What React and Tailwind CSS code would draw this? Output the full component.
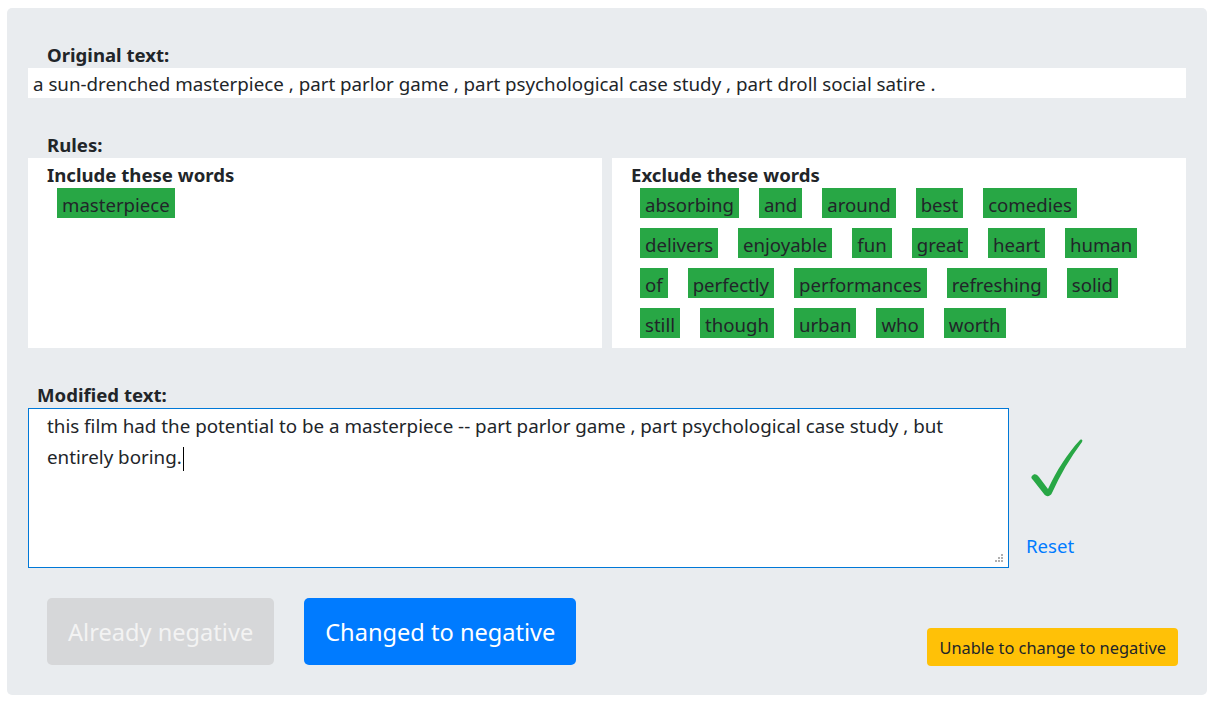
import React from 'react';

const include = ['masterpiece'];
const exclude = [
   'absorbing', 'and', 'around', 'best', 'comedies',
   'delivers', 'enjoyable', 'fun', 'great', 'heart', 'human',
   'of', 'perfectly', 'performances', 'refreshing', 'solid',
   'still', 'though', 'urban', 'who', 'worth',
];

function Tag({ word }) {
   return (
      <span className="bg-[#28a745] text-[#212529] h-[30px] leading-[26px] pt-[4px] px-[5px] text-[18.6px]">
         {word}
      </span>
   );
}

export default function App() {
   return (
      <div className="bg-white min-h-screen pl-[7px] pr-[8px] pt-[8px] pb-[9px] font-['Noto_Sans',sans-serif] text-[#212529]">
         <div className="bg-[#e9ecef] rounded-[5px] px-[21px] pt-[35px] pb-[30px]">
            <div className="pl-[19px] font-bold text-[18.6px] leading-[24px] mb-px">Original text:</div>
            <div className="bg-white h-[30px] leading-[28px] pt-[2px] pl-[5px] text-[18.75px]">
               a sun-drenched masterpiece , part parlor game , part psychological case study , part droll social satire .
            </div>

            <div className="pl-[19px] font-bold text-[18.6px] leading-[24px] mt-[35px] mb-px">Rules:</div>
            <div className="flex gap-[10px]">
               <div className="flex-1 bg-white h-[190px] pt-[5px]">
                  <div className="pl-[19px] font-bold text-[18.6px] leading-[24px] mb-px">Include these words</div>
                  <div className="flex flex-wrap gap-x-[20px] gap-y-[10px] pl-[29px]">
                     {include.map(w => <Tag key={w} word={w} />)}
                  </div>
               </div>
               <div className="flex-1 bg-white h-[190px] pt-[5px]">
                  <div className="pl-[19px] font-bold text-[18.6px] leading-[24px] mb-px">Exclude these words</div>
                  <div className="flex flex-wrap gap-x-[20px] gap-y-[10px] pl-[28px] pr-[30px]">
                     {exclude.map(w => <Tag key={w} word={w} />)}
                  </div>
               </div>
            </div>

            <div className="pl-[9px] font-bold text-[18.6px] leading-[24px] mt-[35px] mb-px">Modified text:</div>
            <div className="flex">
               <div className="relative w-[981px] h-[160px] bg-white border border-[#0078d7] pl-[18px] pr-[20px] pt-[2px] text-[18.8px] leading-[31px]">
                  this film had the potential to be a masterpiece -- part parlor game , part psychological case study , but entirely boring.<span className="inline-block w-px h-[24px] bg-black align-middle ml-px"></span>
                  <svg className="absolute right-[4px] bottom-[4px]" width="10" height="10" viewBox="0 0 10 10">
                     <rect x="7" y="1" width="2" height="2" fill="#b0b0b0" />
                     <rect x="4" y="4" width="2" height="2" fill="#b0b0b0" />
                     <rect x="7" y="4" width="2" height="2" fill="#b0b0b0" />
                     <rect x="1" y="7" width="2" height="2" fill="#b0b0b0" />
                     <rect x="4" y="7" width="2" height="2" fill="#b0b0b0" />
                     <rect x="7" y="7" width="2" height="2" fill="#b0b0b0" />
                  </svg>
               </div>
               <div className="flex flex-col pl-[17px] pt-[30px]">
                  <svg width="56" height="60" viewBox="0 0 56 60" className="ml-[3px]">
                     <path
                        d="M3 38 C5 35 8 36 10 39 L19 51 C28 32 38 16 51 2 C53 1 54 2 53 4 C41 20 31 37 23 55 C21 59 17 59 15 56 L4 42 C2 40 2 39 3 38 Z"
                        fill="#28a745"
                     />
                  </svg>
                  <a className="text-[#007bff] text-[18.6px] leading-[24px] mt-[36px]">Reset</a>
               </div>
            </div>

            <div className="flex items-end mt-[30px] pl-[19px] pr-[8px]">
               <button className="h-[67px] pt-[3px] px-[21px] rounded-[5px] bg-[#d6d7d9] text-[#f3f3f3] text-[23.6px]">Already negative</button>
               <button className="h-[67px] pt-[3px] px-[21px] rounded-[5px] bg-[#007bff] text-white text-[23.6px] ml-[30px]">Changed to negative</button>
               <span className="ml-auto -mb-px h-[38px] leading-[36px] pt-[2px] px-[12px] rounded-[4px] bg-[#ffc107] text-[#212529] text-[16.4px]">Unable to change to negative</span>
            </div>
         </div>
      </div>
   );
}
